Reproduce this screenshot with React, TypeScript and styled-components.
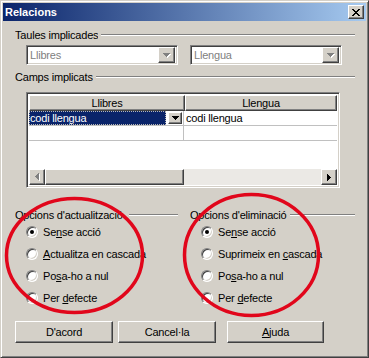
import React from 'react'
import styled, { createGlobalStyle, css } from 'styled-components'

const face = '#d4d0c8'
const shadow = '#808080'
const dark = '#404040'
const hilite = '#ffffff'
const selBlue = '#0a246a'

const GlobalStyle = createGlobalStyle`
  html, body {
    margin: 0;
    padding: 0;
    background: ${face};
  }
`

const raised = css`
  box-sizing: border-box;
  background: ${face};
  border: 1px solid;
  border-color: ${hilite} ${dark} ${dark} ${hilite};
  box-shadow: inset -1px -1px ${shadow}, inset 1px 1px ${face};
`

const sunken = css`
  box-sizing: border-box;
  border: 1px solid;
  border-color: ${shadow} ${hilite} ${hilite} ${shadow};
  box-shadow: inset 1px 1px ${dark}, inset -1px -1px ${face};
`

const Window = styled.div`
  position: relative;
  box-sizing: border-box;
  width: 369px;
  height: 358px;
  padding: 2px;
  background: ${face};
  border: 1px solid;
  border-color: ${face} ${dark} ${dark} ${face};
  box-shadow: inset 1px 1px ${hilite}, inset -1px -1px ${shadow};
  font-family: 'Liberation Sans', Arial, sans-serif;
  font-size: 11px;
  letter-spacing: -0.2px;
  color: #000;
`

const TitleBar = styled.div`
  display: flex;
  align-items: center;
  justify-content: space-between;
  height: 18px;
  padding: 0 2px;
  background: linear-gradient(to right, #0a246a, #a6caf0);
`

const Title = styled.span`
  color: #fff;
  font-weight: bold;
  font-size: 11px;
  letter-spacing: 0;
`

const CloseButton = styled.div`
  ${raised};
  width: 16px;
  height: 14px;
  display: flex;
  align-items: center;
  justify-content: center;
  padding-right: 1px;
`

const Body = styled.div`
  padding: 0 11px 0 12px;
`

const SectionHeader = styled.div<{ $mt: number }>`
  display: flex;
  align-items: center;
  height: 13px;
  margin-top: ${(p) => p.$mt}px;
`

const HeaderLabel = styled.span<{ $w?: number }>`
  white-space: nowrap;
  overflow: hidden;
  ${(p) => (p.$w ? `width: ${p.$w}px; flex: 0 0 auto;` : '')}
`

const Rule = styled.div`
  flex: 1;
  height: 0;
  border-top: 1px solid ${shadow};
  border-bottom: 1px solid ${hilite};
  margin-left: 3px;
`

const ComboRow = styled.div`
  display: flex;
  gap: 12px;
  margin: 4px 0 0 11px;
`

const Combo = styled.div`
  ${sunken};
  display: flex;
  align-items: center;
  width: 152px;
  height: 20px;
  padding: 2px;
  background: #fff;
`

const ComboText = styled.span`
  flex: 1;
  padding-left: 1px;
  color: ${shadow};
`

const ArrowButton = styled.div<{ $w: number; $h: number }>`
  ${raised};
  width: ${(p) => p.$w}px;
  height: ${(p) => p.$h}px;
  display: flex;
  align-items: center;
  justify-content: center;
  flex: 0 0 auto;
`

const Grid = styled.div`
  ${sunken};
  display: flex;
  flex-direction: column;
  width: 314px;
  height: 96px;
  margin: 9px 0 0 11px;
  padding: 2px;
  background: #fff;
`

const GridHeader = styled.div`
  display: flex;
  height: 16px;
`

const HeaderCell = styled.div<{ $w?: number }>`
  ${raised};
  ${(p) => (p.$w ? `width: ${p.$w}px;` : 'flex: 1;')}
  display: flex;
  align-items: center;
  justify-content: center;
`

const DataRow = styled.div`
  display: flex;
  height: 15px;
  box-sizing: border-box;
  border-bottom: 1px solid #c0c0c0;
`

const Cell = styled.div<{ $w?: number }>`
  ${(p) => (p.$w ? `width: ${p.$w}px; border-right: 1px solid #c0c0c0;` : 'flex: 1;')}
  box-sizing: border-box;
  display: flex;
  align-items: center;
  padding-left: 2px;
  white-space: nowrap;
`

const SelectedCell = styled.div`
  width: 155px;
  box-sizing: border-box;
  border-right: 1px solid #c0c0c0;
  display: flex;
  align-items: center;
  gap: 2px;
  padding-right: 1px;
`

const Selection = styled.span`
  flex: 1;
  height: 14px;
  box-sizing: border-box;
  display: flex;
  align-items: center;
  background: ${selBlue};
  color: #fff;
  outline: 1px dotted #b8b8b8;
  outline-offset: -1px;
  padding-left: 1px;
`

const Filler = styled.div`
  flex: 1;
`

const HScroll = styled.div`
  display: flex;
  height: 16px;
`

const Thumb = styled.div`
  ${raised};
  width: 139px;
`

const Track = styled.div`
  flex: 1;
  background: #ebe9e5;
`

const Columns = styled.div`
  display: grid;
  grid-template-columns: 163px 1fr;
  column-gap: 12px;
  margin-top: 20px;
`

const RadioRow = styled.label`
  display: flex;
  align-items: center;
  gap: 5px;
  height: 22px;
  padding-left: 11px;
`

const RadioDot = styled.span<{ $on?: boolean }>`
  position: relative;
  width: 12px;
  height: 12px;
  box-sizing: border-box;
  border-radius: 50%;
  border: 1px solid;
  border-color: ${shadow} ${hilite} ${hilite} ${shadow};
  box-shadow: inset 1px 1px ${dark}, inset -1px -1px ${face};
  background: #fff;
  flex: 0 0 auto;

  &::after {
    content: '';
    display: ${(p) => (p.$on ? 'block' : 'none')};
    position: absolute;
    left: 3px;
    top: 3px;
    width: 4px;
    height: 4px;
    border-radius: 50%;
    background: #000;
  }
`

const U = styled.span`
  text-decoration: underline;
`

const ButtonRow = styled.div`
  display: flex;
  margin-top: 12px;
`

const Button = styled.div<{ $w: number; $ml?: number }>`
  ${raised};
  width: ${(p) => p.$w}px;
  height: 22px;
  margin-left: ${(p) => p.$ml ?? 0}px;
  display: flex;
  align-items: center;
  justify-content: center;
`

const Marks = styled.svg`
  position: absolute;
  left: -1px;
  top: -1px;
  pointer-events: none;
`

const Pixels = ({ w, h, rects, color }: { w: number; h: number; rects: number[][]; color: string }) => (
  <svg width={w} height={h} viewBox={`0 0 ${w} ${h}`} shapeRendering="crispEdges">
    {rects.map(([x, y, rw, rh], i) => (
      <rect key={i} x={x} y={y} width={rw} height={rh} fill={color} />
    ))}
  </svg>
)

const down = [[0, 0, 7, 1], [1, 1, 5, 1], [2, 2, 3, 1], [3, 3, 1, 1]]
const left = [[0, 3, 1, 1], [1, 2, 1, 3], [2, 1, 1, 5], [3, 0, 1, 7]]
const right = [[3, 3, 1, 1], [2, 2, 1, 3], [1, 1, 1, 5], [0, 0, 1, 7]]
const cross = [
  [0, 0, 2, 1], [6, 0, 2, 1],
  [1, 1, 2, 1], [5, 1, 2, 1],
  [2, 2, 4, 1],
  [3, 3, 2, 1],
  [2, 4, 4, 1],
  [1, 5, 2, 1], [5, 5, 2, 1],
  [0, 6, 2, 1], [6, 6, 2, 1],
]

const DisabledArrow = ({ rects, w, h }: { rects: number[][]; w: number; h: number }) => (
  <svg width={w + 1} height={h + 1} viewBox={`0 0 ${w + 1} ${h + 1}`} shapeRendering="crispEdges">
    {rects.map(([x, y, rw, rh], i) => (
      <rect key={'s' + i} x={x + 1} y={y + 1} width={rw} height={rh} fill="#fff" />
    ))}
    {rects.map(([x, y, rw, rh], i) => (
      <rect key={i} x={x} y={y} width={rw} height={rh} fill={shadow} />
    ))}
  </svg>
)

type Opt = { on?: boolean; label: React.ReactNode }

const updateOpts: Opt[] = [
  { on: true, label: <>Se<U>n</U>se acció</> },
  { label: <><U>A</U>ctualitza en cascada</> },
  { label: <>Po<U>s</U>a-ho a nul</> },
  { label: <>Per <U>d</U>efecte</> },
]

const deleteOpts: Opt[] = [
  { on: true, label: <>Se<U>n</U>se acció</> },
  { label: <>Suprimeix en <U>c</U>ascada</> },
  { label: <>Po<U>s</U>a-ho a nul</> },
  { label: <>Per <U>d</U>efecte</> },
]

const OptionGroup = ({ title, width, opts }: { title: string; width?: number; opts: Opt[] }) => (
  <div>
    <SectionHeader $mt={0}>
      <HeaderLabel $w={width}>{title}</HeaderLabel>
      <Rule />
    </SectionHeader>
    {opts.map((o, i) => (
      <RadioRow key={i}>
        <RadioDot $on={o.on} />
        <span>{o.label}</span>
      </RadioRow>
    ))}
  </div>
)

export default function App() {
  return (
    <Window>
      <GlobalStyle />
      <TitleBar>
        <Title>Relacions</Title>
        <CloseButton>
          <Pixels w={8} h={7} rects={cross} color="#000" />
        </CloseButton>
      </TitleBar>

      <Body>
        <SectionHeader $mt={7}>
          <HeaderLabel>Taules implicades</HeaderLabel>
          <Rule />
        </SectionHeader>
        <ComboRow>
          <Combo>
            <ComboText>Llibres</ComboText>
            <ArrowButton $w={17} $h={16}>
              <DisabledArrow rects={down} w={7} h={4} />
            </ArrowButton>
          </Combo>
          <Combo>
            <ComboText>Llengua</ComboText>
            <ArrowButton $w={17} $h={16}>
              <DisabledArrow rects={down} w={7} h={4} />
            </ArrowButton>
          </Combo>
        </ComboRow>

        <SectionHeader $mt={5}>
          <HeaderLabel>Camps implicats</HeaderLabel>
          <Rule />
        </SectionHeader>

        <Grid>
          <GridHeader>
            <HeaderCell $w={156}>Llibres</HeaderCell>
            <HeaderCell>Llengua</HeaderCell>
          </GridHeader>
          <DataRow>
            <SelectedCell>
              <Selection>codi llengua</Selection>
              <ArrowButton $w={14} $h={12}>
                <Pixels w={7} h={4} rects={down} color="#000" />
              </ArrowButton>
            </SelectedCell>
            <Cell>codi llengua</Cell>
          </DataRow>
          <DataRow>
            <Cell $w={155} />
            <Cell />
          </DataRow>
          <Filler />
          <HScroll>
            <ArrowButton $w={16} $h={16}>
              <DisabledArrow rects={left} w={4} h={7} />
            </ArrowButton>
            <Thumb />
            <Track />
            <ArrowButton $w={16} $h={16}>
              <Pixels w={4} h={7} rects={right} color="#000" />
            </ArrowButton>
          </HScroll>
        </Grid>

        <Columns>
          <OptionGroup title="Opcions d'actualització" width={111} opts={updateOpts} />
          <OptionGroup title="Opcions d'eliminació" opts={deleteOpts} />
        </Columns>

        <ButtonRow>
          <Button $w={98}>D'acord</Button>
          <Button $w={98} $ml={5}>Cancel·la</Button>
          <Button $w={97} $ml={11}>
            <U>A</U>juda
          </Button>
        </ButtonRow>
      </Body>

      <Marks width={369} height={358} viewBox="0 0 369 358">
        <ellipse cx={74.5} cy={255.5} rx={68} ry={57} fill="none" stroke="#e1061b" strokeWidth={3.5} />
        <ellipse cx={251.5} cy={255} rx={67} ry={60.5} fill="none" stroke="#e1061b" strokeWidth={3.5} />
      </Marks>
    </Window>
  )
}
